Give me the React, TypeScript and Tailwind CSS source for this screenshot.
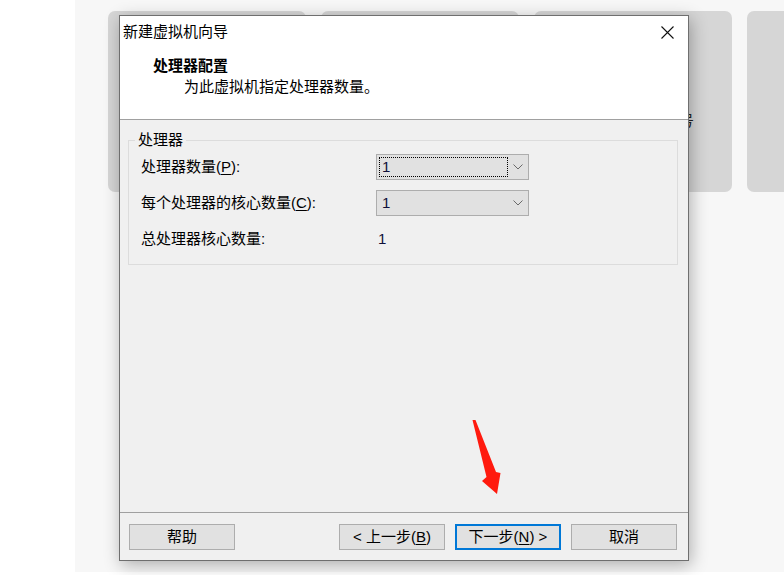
import { ReactNode } from "react";

const font = { fontFamily: '"Liberation Sans", "Noto Sans CJK SC", sans-serif' };

function Mnemonic({ children }: { children: ReactNode }) {
  return <span className="underline underline-offset-2">{children}</span>;
}

function Chevron() {
  return (
    <svg width="10" height="6" viewBox="0 0 10 6" className="shrink-0">
      <polyline points="0.5,0.5 5,5 9.5,0.5" fill="none" stroke="#6a6a6a" strokeWidth="1" />
    </svg>
  );
}

function Combo({ focused }: { focused?: boolean }) {
  return (
    <div className="flex h-[26px] w-[153px] items-center border border-[#adadad] bg-[#e1e1e1] pr-[5px]">
      <div className="flex h-full flex-1 items-center p-[2px]">
        <div
          className={
            "flex h-full w-[129px] items-center pl-[2px] text-[15px] text-[#10103a] " +
            (focused ? "border border-dotted border-black" : "border border-transparent")
          }
        >
          1
        </div>
      </div>
      <Chevron />
    </div>
  );
}

function WizardButton({ children, primary }: { children: ReactNode; primary?: boolean }) {
  return (
    <button
      className={
        "flex h-[26px] w-[106px] items-center justify-center bg-[#e1e1e1] text-[15px] text-black " +
        (primary ? "border-2 border-[#0078d7]" : "border border-[#adadad]")
      }
    >
      {children}
    </button>
  );
}

function Row({ label, children }: { label: ReactNode; children: ReactNode }) {
  return (
    <div className="flex h-[26px] items-center">
      <div className="w-[235px] text-[15px] text-black">{label}</div>
      {children}
    </div>
  );
}

export default function App() {
  return (
    <div className="relative h-[575px] w-[784px] overflow-hidden bg-white" style={font}>
      <div className="ml-[75px] h-[572px] bg-[#f7f7f7] pl-[33px] pt-[11px]">
        <div className="flex gap-[15px]">
          <div className="h-[181px] w-[198px] shrink-0 rounded-[7px] bg-[#d6d6d6]" />
          <div className="h-[181px] w-[198px] shrink-0 rounded-[7px] bg-[#d6d6d6]" />
          <div className="relative h-[181px] w-[198px] shrink-0 rounded-[7px] bg-[#d6d6d6]">
            <span className="absolute left-[145px] top-[99px] text-[15px] text-[#222]">号</span>
          </div>
          <div className="h-[181px] w-[198px] shrink-0 rounded-[7px] bg-[#d6d6d6]" />
        </div>
      </div>

      {/* wizard window */}
      <div className="absolute left-[119px] top-[15px] flex h-[546px] w-[570px] flex-col border border-[#6f6f6f] bg-[#f0f0f0] shadow-[2px_4px_16px_rgba(0,0,0,0.3)]">
        <div className="h-[104px] border-b border-[#a0a0a0] bg-white">
          <div className="flex h-[32px] items-center justify-between pl-[3px] pr-[14px]">
            <span className="text-[15px] text-black">新建虚拟机向导</span>
            <svg width="13" height="13" viewBox="0 0 13 13">
              <path d="M0.5 0.5 L12.5 12.5 M12.5 0.5 L0.5 12.5" stroke="#111" strokeWidth="1.1" />
            </svg>
          </div>
          <p className="mt-[8px] pl-[33px] text-[15px] leading-[20px] font-bold text-black">处理器配置</p>
          <p className="mt-[1px] pl-[64px] text-[15px] leading-[20px] text-black">为此虚拟机指定处理器数量。</p>
        </div>

        <div className="flex-1 pl-[8px] pr-[10px] pt-[20px]">
          <div className="relative h-[125px] border border-[#dcdcdc] pl-[12px] pt-[13px]">
            <span className="absolute -top-[11px] left-[6px] bg-[#f0f0f0] px-[3px] text-[15px] leading-[20px] text-black">
              处理器
            </span>
            <div className="flex flex-col gap-[10px]">
              <Row label={<>处理器数量(<Mnemonic>P</Mnemonic>):</>}>
                <Combo focused />
              </Row>
              <Row label={<>每个处理器的核心数量(<Mnemonic>C</Mnemonic>):</>}>
                <Combo />
              </Row>
              <Row label="总处理器核心数量:">
                <span className="pl-[2px] text-[15px] text-[#10103a]">1</span>
              </Row>
            </div>
          </div>
        </div>

        <div className="flex h-[48px] items-start border-t border-[#a0a0a0] pl-[9px] pr-[11px] pt-[11px]">
          <WizardButton>帮助</WizardButton>
          <div className="flex-1" />
          <div className="flex gap-[10px]">
            <WizardButton>
              &lt; 上一步(<Mnemonic>B</Mnemonic>)
            </WizardButton>
            <WizardButton primary>
              下一步(<Mnemonic>N</Mnemonic>) &gt;
            </WizardButton>
            <WizardButton>取消</WizardButton>
          </div>
        </div>
      </div>

      {/* red annotation arrow */}
      <svg className="pointer-events-none absolute left-0 top-0" width="784" height="575">
        <polygon points="472.5,420 475.5,420 496,472 500.5,473 497,494 482,481 486.5,477" fill="#ff1a0e" />
      </svg>
    </div>
  );
}
